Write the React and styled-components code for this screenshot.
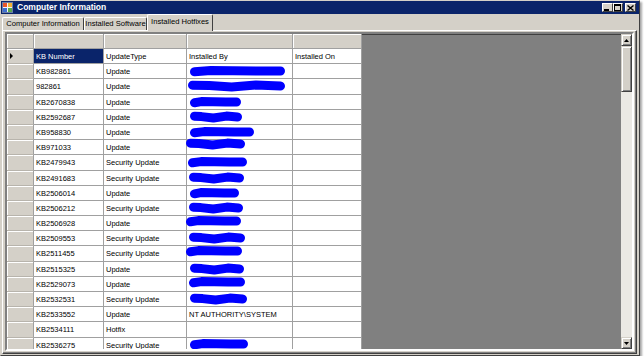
import styled, { createGlobalStyle } from "styled-components";

const GlobalStyle = createGlobalStyle`
  html, body {
    margin: 0;
    padding: 0;
    background: #ffffff;
  }
  body {
    font-family: "Liberation Sans", Arial, sans-serif;
  }
`;

// x = offset of the redaction inside the "Installed By" cell, w = its width
const ROWS = [
  { kb: "KB Number", type: "UpdateType", by: "Installed By", on: "Installed On", current: true },
  { kb: "KB982861", type: "Update", mark: { x: 3, w: 95 } },
  { kb: "982861", type: "Update", mark: { x: 1, w: 97 } },
  { kb: "KB2670838", type: "Update", mark: { x: 3, w: 51 } },
  { kb: "KB2592687", type: "Update", mark: { x: 3, w: 52 } },
  { kb: "KB958830", type: "Update", mark: { x: 3, w: 64 } },
  { kb: "KB971033", type: "Update", mark: { x: -1, w: 59, dy: -3 } },
  { kb: "KB2479943", type: "Security Update", mark: { x: 1, w: 59 } },
  { kb: "KB2491683", type: "Security Update", mark: { x: 2, w: 55 } },
  { kb: "KB2506014", type: "Update", mark: { x: 3, w: 49 } },
  { kb: "KB2506212", type: "Security Update", mark: { x: 2, w: 54 } },
  { kb: "KB2506928", type: "Update", mark: { x: -1, w: 55, dy: -2 } },
  { kb: "KB2509553", type: "Security Update", mark: { x: 2, w: 56 } },
  { kb: "KB2511455", type: "Security Update", mark: { x: -1, w: 56, dy: -2 } },
  { kb: "KB2515325", type: "Update", mark: { x: 3, w: 54 } },
  { kb: "KB2529073", type: "Update", mark: { x: 2, w: 56, dy: -2 } },
  { kb: "KB2532531", type: "Security Update", mark: { x: 3, w: 57 } },
  { kb: "KB2533552", type: "Update", by: "NT AUTHORITY\\SYSTEM" },
  { kb: "KB2534111", type: "Hotfix" },
  { kb: "KB2536275", type: "Security Update", mark: { x: 3, w: 58, dy: -1 } },
];

const TABS = [
  { label: "Computer Information", width: 82 },
  { label: "Installed Software", width: 63 },
  { label: "Installed Hotfixes", width: 66, active: true },
];

function Scribble({ w, dy = 0, seed }) {
  const a = seed % 2 ? 1 : -1;
  const d = `M4.5 ${6 + a * 0.8} L${w * 0.22} ${5.6} L${w * 0.45} ${6.4 - a * 0.6} L${w * 0.7} ${5.6 + a * 0.5} L${w - 4.5} ${6}`;
  return (
    <StMark width={w} height="13" viewBox={`0 0 ${w} 13`} style={{ top: 1 + dy }}>
      <path d={d} fill="none" stroke="#0000ff" strokeWidth="9" strokeLinecap="round" strokeLinejoin="round" />
    </StMark>
  );
}

function AppIcon() {
  return (
    <svg width="11" height="11" viewBox="0 0 11 11">
      <rect x="0.5" y="0.5" width="10" height="10" fill="#f4f4f4" stroke="#6a7ea8" />
      <rect x="1" y="1" width="4" height="4" fill="#e8562a" />
      <rect x="6" y="1" width="4" height="4" fill="#f2b233" />
      <rect x="1" y="6" width="4" height="4" fill="#3f6fd0" />
      <rect x="6" y="6" width="4" height="4" fill="#5aa84a" />
    </svg>
  );
}

function CaptionGlyph({ kind }) {
  if (kind === "min") {
    return (
      <svg width="6" height="6" viewBox="0 0 6 6">
        <rect x="0" y="4" width="5" height="2" fill="#000" />
      </svg>
    );
  }
  if (kind === "max") {
    return (
      <svg width="7" height="7" viewBox="0 0 7 7">
        <rect x="0.5" y="0.5" width="6" height="6" fill="none" stroke="#000" />
        <rect x="0" y="0" width="7" height="2" fill="#000" />
      </svg>
    );
  }
  return (
    <svg width="7" height="6" viewBox="0 0 7 6">
      <path d="M0.5 0.5 L6.5 5.5 M6.5 0.5 L0.5 5.5" stroke="#000" strokeWidth="1.4" />
    </svg>
  );
}

function ArrowGlyph({ down }) {
  return (
    <svg width="5" height="3" viewBox="0 0 5 3">
      <path d={down ? "M0 0 H5 L2.5 3 Z" : "M0 3 H5 L2.5 0 Z"} fill="#000" />
    </svg>
  );
}

function App() {
  return (
    <>
      <GlobalStyle />
      <StWindow>
        <StTitleBar>
          <AppIcon />
          <StTitle>Computer Information</StTitle>
          <StCaptionButtons>
            <StCaptionButton>
              <CaptionGlyph kind="min" />
            </StCaptionButton>
            <StCaptionButton>
              <CaptionGlyph kind="max" />
            </StCaptionButton>
            <StCaptionButton $close>
              <CaptionGlyph kind="close" />
            </StCaptionButton>
          </StCaptionButtons>
        </StTitleBar>

        <StTabStrip>
          {TABS.map((tab) => (
            <StTab key={tab.label} $active={tab.active} $width={tab.width}>
              {tab.label}
            </StTab>
          ))}
        </StTabStrip>

        <StTabPanel>
          <StGrid>
            <StTableArea>
              <StTable>
                <StRowHead $top />
                <StHeadCell />
                <StHeadCell />
                <StHeadCell />
                <StHeadCell />
                {ROWS.map((row, i) => (
                  <StRowGroup key={i}>
                    <StRowHead>{row.current && <StPointer />}</StRowHead>
                    <StCell $selected={row.current}>{row.kb}</StCell>
                    <StCell>{row.type}</StCell>
                    <StCell>
                      {row.by}
                      {row.mark && (
                        <StMarkSlot style={{ left: row.mark.x }}>
                          <Scribble w={row.mark.w} dy={row.mark.dy} seed={i} />
                        </StMarkSlot>
                      )}
                    </StCell>
                    <StCell>{row.on}</StCell>
                  </StRowGroup>
                ))}
              </StTable>
            </StTableArea>
            <StScrollBar>
              <StScrollButton>
                <ArrowGlyph />
              </StScrollButton>
              <StThumb />
              <StTrack />
              <StScrollButton>
                <ArrowGlyph down />
              </StScrollButton>
            </StScrollBar>
          </StGrid>
        </StTabPanel>
      </StWindow>
    </>
  );
}

export default App;

const StWindow = styled.div`
  display: flex;
  flex-direction: column;
  box-sizing: border-box;
  width: 640px;
  height: 356px;
  background: #d4d0c8;
  border: 1px solid;
  border-color: #d4d0c8 #404040 #404040 #d4d0c8;
  box-shadow: 2px 2px 2px rgba(0, 0, 0, 0.35);
`;

const StTitleBar = styled.div`
  display: flex;
  align-items: center;
  height: 13px;
  padding: 0 3px 0 1px;
  background: #0a246a;
  gap: 4px;
`;

const StTitle = styled.div`
  flex: 1;
  color: #ffffff;
  font-size: 8.5px;
  font-weight: 700;
  line-height: 13px;
  white-space: nowrap;
`;

const StCaptionButtons = styled.div`
  display: flex;
  align-items: center;

  & > :last-child {
    margin-left: 2px;
  }
`;

const StCaptionButton = styled.div`
  display: flex;
  align-items: center;
  justify-content: center;
  box-sizing: border-box;
  width: ${({ $close }) => ($close ? "11px" : "10.5px")};
  height: 9px;
  background: #d4d0c8;
  border: 1px solid;
  border-color: #ffffff #404040 #404040 #ffffff;
`;

const StTabStrip = styled.div`
  display: flex;
  align-items: flex-end;
  height: 16px;
  padding-left: 1px;
  position: relative;
  z-index: 1;
`;

const StTab = styled.div`
  display: flex;
  justify-content: center;
  box-sizing: border-box;
  width: ${({ $width }) => $width}px;
  height: ${({ $active }) => ($active ? "17px" : "13px")};
  margin-bottom: ${({ $active }) => ($active ? "-1px" : "0")};
  padding-top: ${({ $active }) => ($active ? "2px" : "1px")};
  background: #d4d0c8;
  border-top: 1px solid #ffffff;
  border-left: 1px solid #ffffff;
  border-right: 1px solid #404040;
  border-top-left-radius: 2px;
  border-top-right-radius: 2px;
  color: #000000;
  font-size: 7.6px;
  line-height: 10px;
  white-space: nowrap;
`;

const StTabPanel = styled.div`
  display: flex;
  flex: 1;
  min-height: 0;
  margin: 0 2px 1px 1px;
  padding: 1px 2px 2px 2px;
  border: 1px solid;
  border-color: #ffffff #404040 #404040 #ffffff;
  box-shadow: inset -1px -1px 0 #808080;
`;

const StGrid = styled.div`
  display: flex;
  flex: 1;
  min-width: 0;
  border: 2px solid;
  border-color: #808080 #ffffff #ffffff #808080;
  box-shadow: inset 1px 1px 0 #404040;
  background: #808080;
  overflow: hidden;
`;

const StTableArea = styled.div`
  flex: 1;
  overflow: hidden;
`;

const StTable = styled.div`
  display: grid;
  grid-template-columns: 27px 70px 83px 106px 69px;
  grid-template-rows: 15px;
  grid-auto-rows: 15.2px;
  width: 355px;
  font-size: 7.5px;
  color: #000000;
`;

const StRowGroup = styled.div`
  display: contents;
`;

const StHeadCell = styled.div`
  box-sizing: border-box;
  background: #d4d0c8;
  border-right: 1px solid #a0a0a0;
  border-bottom: 1px solid #a0a0a0;
  box-shadow: inset 1px 1px 0 #ffffff;
`;

const StRowHead = styled.div`
  display: flex;
  align-items: center;
  box-sizing: border-box;
  padding-left: 3px;
  background: #d4d0c8;
  border-right: 1px solid #a0a0a0;
  border-bottom: 1px solid ${({ $top }) => ($top ? "#a0a0a0" : "#b8b4ac")};
  box-shadow: inset 1px 1px 0 #ffffff;
`;

const StPointer = styled.div`
  width: 0;
  height: 0;
  border-top: 3px solid transparent;
  border-bottom: 3px solid transparent;
  border-left: 3.5px solid #000000;
`;

const StCell = styled.div`
  position: relative;
  box-sizing: border-box;
  padding: 1px 2px 0;
  background: ${({ $selected }) => ($selected ? "#0a246a" : "#ffffff")};
  color: ${({ $selected }) => ($selected ? "#ffffff" : "#000000")};
  border-right: 1px solid #a0a0a0;
  border-bottom: 1px solid #a0a0a0;
  line-height: 14px;
  white-space: nowrap;
`;

const StMarkSlot = styled.div`
  position: absolute;
  top: 0;
  height: 14px;
`;

const StMark = styled.svg`
  position: absolute;
  left: 0;
  display: block;
`;

const StScrollBar = styled.div`
  display: flex;
  flex-direction: column;
  width: 11px;
  background: #ebe9e4;
`;

const StScrollButton = styled.div`
  display: flex;
  align-items: center;
  justify-content: center;
  box-sizing: border-box;
  height: 12px;
  background: #d4d0c8;
  border: 1px solid;
  border-color: #d4d0c8 #404040 #404040 #d4d0c8;
  box-shadow: inset 1px 1px 0 #ffffff, inset -1px -1px 0 #808080;
`;

const StThumb = styled.div`
  box-sizing: border-box;
  height: 46px;
  background: #d4d0c8;
  border: 1px solid;
  border-color: #d4d0c8 #404040 #404040 #d4d0c8;
  box-shadow: inset 1px 1px 0 #ffffff, inset -1px -1px 0 #808080;
`;

const StTrack = styled.div`
  flex: 1;
`;
